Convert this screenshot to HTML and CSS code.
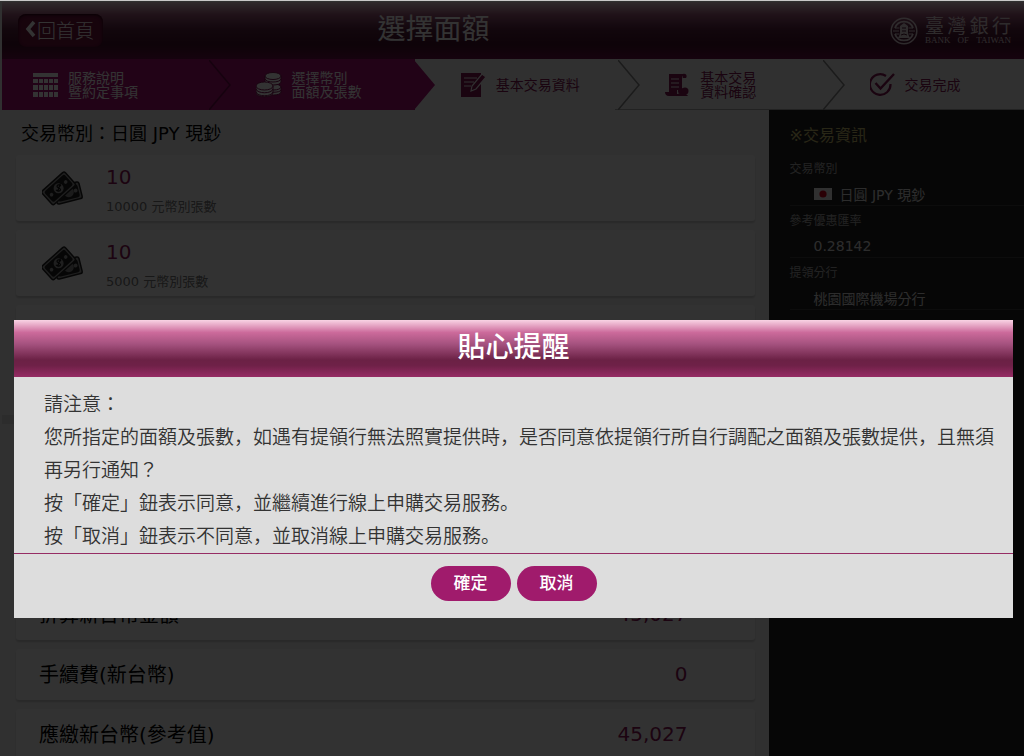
FILE: index.html
```html
<!DOCTYPE html>
<html lang="zh-Hant">
<head>
  <meta charset="UTF-8">
  <meta name="viewport" content="width=device-width, initial-scale=1">
  <title>選擇面額</title>
  <link rel="stylesheet" href="styles.css">
</head>

<body>
  <svg class="symbols" aria-hidden="true">
    <symbol id="chevron" viewBox="0 0 22 50">
      <path d="M0 0 L21 25 L0 50" fill="none" stroke="currentColor" stroke-width="1.5"/>
    </symbol>
    <symbol id="bills" viewBox="0 0 42 36">
      <g transform="rotate(-14 28 22)">
        <rect x="13" y="13" width="26" height="17" rx="2" fill="#999" stroke="#222" stroke-width="1.5"/>
        <rect x="15" y="15" width="22" height="13" rx="2" fill="#222"/>
        <circle cx="27" cy="21" r="5" fill="#888"/>
        <circle cx="34" cy="21" r="2" fill="#999"/>
      </g>
      <g transform="rotate(-42 17 17)">
        <rect x="1" y="8" width="31" height="18" rx="2" fill="#999" stroke="#222" stroke-width="1.5"/>
        <rect x="3" y="10" width="27" height="14" rx="2" fill="#222"/>
        <circle cx="16.5" cy="17" r="5" fill="#999"/>
        <circle cx="7" cy="17" r="1.8" fill="#999"/>
        <circle cx="26" cy="17" r="1.8" fill="#999"/>
      </g>
      <path d="M19 15c-2-2-4-1-4 .5s4 1.5 3.500 3.300-3 1.500-4.500 0M18.500 12.500l-3 8" fill="none" stroke="#111" stroke-width="1.2"/>
    </symbol>
  </svg>

  <div class="page">
    <header class="header">
      <button type="button" class="home">
        <svg width="11" height="18" viewBox="0 0 11 18"><path d="M9 2 L3 9 L9 16" fill="none" stroke="currentColor" stroke-width="3.5"/></svg>
        回首頁
      </button>
      <h1>選擇面額</h1>
      <div class="logo">
        <svg width="28" height="28" viewBox="0 0 28 28" fill="none" stroke="currentColor">
          <circle cx="14" cy="14" r="12.8" stroke-width="1.5"/>
          <path d="M5 11a9.500 9.500 0 0 1 18 0M5 17a9.500 9.500 0 0 0 18 0" stroke-width="1.8"/>
          <path d="M5 11h4.500M3 14h6M5 17h4.500M18.500 11H23M19 14h6M18.500 17H23" stroke-width="1.2"/>
          <path d="M14 6l4 3v8l2 4H8l2-4V9z" fill="currentColor" stroke="none"/>
          <path d="M12 11h4M12 14h4M11 18l3-1 3 1" stroke="#4a1630"/>
        </svg>
        <div class="logo-text">
          <div class="logo-zh"><span>臺</span><span>灣</span><span>銀</span><span>行</span></div>
          <div class="logo-en"><span>BANK</span><span>OF</span><span>TAIWAN</span></div>
        </div>
      </div>
    </header>

    <ol class="steps">
      <li class="step active">
        <svg class="icon" viewBox="0 0 28 28" fill="currentColor">
          <path d="M0 2h25v4H0zM0 8h5v4H0zM6 8h4v4H6zM11 8h4v4h-4zM16 8h4v4h-4zM21 8h4v4h-4zM0 14h5v5H0zM6 14h4v5H6zM11 14h4v5h-4zM16 14h4v5h-4zM21 14h4v5h-4zM0 21h5v5H0zM6 21h4v5H6zM11 21h4v5h-4zM16 21h4v5h-4zM21 21h4v5h-4z"/>
        </svg>
        <span>服務說明<br>暨約定事項</span>
      </li>
      <li class="step active">
        <svg class="chevron"><use href="#chevron"/></svg>
        <svg class="icon" viewBox="0 0 28 28">
          <g fill="currentColor" stroke="#7d1253">
            <path d="M10 16v5c0 4 15 4 15 0v-5z"/>
            <path d="M10 19c1 3 14 3 15 0" fill="none"/>
            <ellipse cx="17.5" cy="16" rx="7.5" ry="3"/>
            <path d="M9 5v6c0 4 16 4 16 0V5z"/>
            <path d="M9 8c1 4 15 4 16 0" fill="none"/>
            <ellipse cx="17" cy="5" rx="8" ry="3.5"/>
            <path d="M0 15v7c0 5 17 5 17 0v-7z"/>
            <path d="M0 18c1 5 16 5 17 0M0 21c1 5 16 5 17 0" fill="none"/>
            <ellipse cx="8.5" cy="15" rx="8.5" ry="4"/>
          </g>
        </svg>
        <span>選擇幣別<br>面額及張數</span>
      </li>
      <li class="step after-active">
        <svg class="chevron" viewBox="0 0 22 50"><path d="M0 0 L21 25 L0 50z"/></svg>
        <svg class="icon" viewBox="0 0 28 28">
          <path d="M0 2h20v24H0z" fill="currentColor"/>
          <path d="M3 7h13M3 11h10M3 15h7" stroke="#f0f0f0" stroke-width="1.2"/>
          <path d="M10 20l1-5L21 3l4 3-10 12z" fill="currentColor" stroke="#f0f0f0" stroke-width="1.2"/>
        </svg>
        <span>基本交易資料</span>
      </li>
      <li class="step">
        <svg class="chevron"><use href="#chevron"/></svg>
        <svg class="icon" viewBox="0 0 28 28">
          <path d="M4 3h15q-2 2-2 5v11h-5v4H4zM0 21h9c0 2 2 2 4 2v2H4c-3 0-4-2-4-4z" fill="currentColor"/>
          <path d="M6 8h8M6 12h8M6 16h8" stroke="#f0f0f0"/>
          <path d="M18 3c4-1 4 3 3 4h-3z" fill="currentColor"/>
          <circle cx="16" cy="20" r="3" fill="currentColor"/>
          <circle cx="20" cy="20" r="3.5" fill="currentColor"/>
          <path d="M11 25c1-4 10-4 12 0z" fill="currentColor"/>
        </svg>
        <span>基本交易<br>資料確認</span>
      </li>
      <li class="step">
        <svg class="chevron"><use href="#chevron"/></svg>
        <svg class="icon" viewBox="0 0 28 28" fill="none" stroke="currentColor">
          <path d="M16 5A10.300 10.300 0 1 0 20.500 13" stroke-width="2.2"/>
          <path d="M5.500 12l5 5.500L24 3" stroke-width="2.4"/>
        </svg>
        <span>交易完成</span>
      </li>
    </ol>

    <div class="columns">
      <main class="main">
        <h2>交易幣別：日圓 JPY 現鈔</h2>
        <div class="cards">
          <div class="card bill">
            <svg width="42" height="36"><use href="#bills"/></svg>
            <div>
              <div class="amount">10</div>
              <div class="note">10000 元幣別張數</div>
            </div>
          </div>
          <div class="card bill">
            <svg width="42" height="36"><use href="#bills"/></svg>
            <div>
              <div class="amount">10</div>
              <div class="note">5000 元幣別張數</div>
            </div>
          </div>
          <div class="card bill"></div>
        </div>
        <div class="cards summary">
          <div class="card total"><span>折算新台幣金額</span><span class="amount">45,027</span></div>
          <div class="card total"><span>手續費(新台幣)</span><span class="amount">0</span></div>
          <div class="card total"><span>應繳新台幣(參考值)</span><span class="amount">45,027</span></div>
        </div>
      </main>

      <aside class="info">
        <h3>※交易資訊</h3>
        <dl>
          <dt>交易幣別</dt>
          <dd><svg class="flag" viewBox="0 0 18 12"><rect width="18" height="12" fill="#eee"/><circle cx="9" cy="6" r="3.6" fill="#d0021b"/></svg>日圓 JPY 現鈔</dd>
          <dt>參考優惠匯率</dt>
          <dd>0.28142</dd>
          <dt>提領分行</dt>
          <dd>桃園國際機場分行</dd>
        </dl>
      </aside>
    </div>
  </div>

  <div class="overlay">
    <div class="dialog" role="dialog" aria-modal="true" aria-labelledby="dialog-title">
      <h2 class="dialog-title" id="dialog-title">貼心提醒</h2>
      <div class="dialog-body" lang="ja">
        <p>請注意：</p>
        <p>您所指定的面額及張數，如遇有提領行無法照實提供時，是否同意依提領行所自行調配之面額及張數提供，且無須再另行通知？</p>
        <p>按「確定」鈕表示同意，並繼續進行線上申購交易服務。</p>
        <p>按「取消」鈕表示不同意，並取消線上申購交易服務。</p>
      </div>
      <div class="dialog-buttons">
        <button type="button">確定</button>
        <button type="button">取消</button>
      </div>
    </div>
  </div>
</body>
</html>
```

FILE: styles.css
```css
* {
  box-sizing: border-box;
}
body {
  margin: 0;
  border-top: 1px solid #c8c8c8;
  background: #f0f0f0;
  color: #000;
  font-family: "DejaVu Sans", "Noto Sans CJK TC", sans-serif;
}
h1, h2, h3, p, ol, dl, dd {
  margin: 0;
  padding: 0;
  font-weight: 400;
}
button {
  font-family: inherit;
  border: 0;
  padding: 0;
}
.symbols {
  display: none;
}
/* no scrolling behind the open dialog */
.page {
  height: calc(100vh - 1px);
  padding: 1px 0 0 2px;
  overflow: hidden;
}

/* header */
.header {
  display: flex;
  align-items: center;
  height: 57px;
  padding-left: 16px;
  background: linear-gradient(#ecd0dc, #a05a7c 22%, #5a2340 48%, #450f2c 75%, #6e1048);
  color: #fff;
}
.home {
  display: flex;
  align-items: center;
  justify-content: center;
  width: 85px;
  height: 33px;
  padding: 0 2px 3px 0;
  border-radius: 8px;
  background: #72143f;
  box-shadow: inset 0 1px 3px #20000f;
  color: #fff;
  font-size: 19px;
  font-weight: 300;
}
.home svg {
  margin-right: 1px;
}
.header h1 {
  flex: 1;
  padding-bottom: 2px;
  text-align: center;
  font-size: 28px;
  line-height: 32px;
}
.logo {
  display: flex;
  justify-content: flex-end;
  align-items: center;
  gap: 7px;
  width: 260px;
  padding-right: 13px;
  color: #e6d6dd;
}
.logo-text {
  width: 86px;
}
.logo-zh, .logo-en {
  display: flex;
  justify-content: space-between;
}
.logo-zh {
  font-size: 19px;
  line-height: 20px;
}
.logo-en {
  font: 9px/9px "Liberation Serif", serif;
}

/* steps */
.steps {
  display: grid;
  grid-template-columns: repeat(5, 1fr);
  height: 51px;
  border-bottom: 1px solid #aaa;
  background: #f0f0f0;
  color: #821450;
  list-style: none;
  font-size: 14px;
  line-height: 14px;
}
.step {
  display: flex;
  align-items: center;
  padding-top: 1px;
}
.step.active {
  background: #a81072;
  color: #fff;
}
.step:first-child {
  padding-left: 31px;
}
.chevron {
  width: 22px;
  height: 50px;
  margin: 0 25px 0 3px;
  color: #888;
}
.active .chevron {
  color: #6c0a49;
}
.after-active {
  background: linear-gradient(to right, #a81072 4px, #f0f0f0 4px);
}
.after-active .chevron {
  fill: #a81072;
}
.icon {
  flex: none;
  width: 28px;
  height: 28px;
  margin-right: 7px;
}

/* content */
.columns {
  display: grid;
  grid-template-columns: 3fr 1fr;
  min-height: 100%;
}
.main h2 {
  padding: 10px 19px 7px;
  font-size: 18px;
  line-height: 28px;
}
.cards {
  display: grid;
  gap: 9px;
  padding: 0 14px 44px;
}
.card {
  display: flex;
  align-items: center;
  border-radius: 3px;
  background: #fafafa;
  box-shadow: 0 2px 2px #c8c8c8;
}
.bill {
  gap: 22px;
  height: 66px;
  padding: 2px 0 0 26px;
}
.amount {
  color: #8e1458;
  font-size: 20px;
  line-height: 28px;
}
.note {
  padding-top: 8px;
  color: #777;
  font-size: 13px;
  line-height: 16px;
}
.summary {
  padding-top: 165px;
  border-top: 9px solid #dcdcdc;
}
.total {
  justify-content: space-between;
  height: 51px;
  padding: 0 67px 2px 23px;
  font-size: 20px;
}
.info {
  padding: 12px 0 0 21px;
  background: #222;
  color: #ddd;
}
.info h3 {
  padding-bottom: 8px;
  color: #c8be6e;
  font-size: 16px;
  line-height: 28px;
}
.info dt {
  color: #aaa;
  font-size: 12px;
  line-height: 22px;
}
.info dd {
  display: flex;
  align-items: center;
  gap: 8px;
  height: 26px;
  margin-bottom: 4px;
  padding: 2px 0 0 24px;
  border-bottom: 1px solid #3c3c3c;
  font-size: 14px;
}
.flag {
  width: 18px;
  height: 12px;
}

/* dialog */
.overlay {
  position: fixed;
  top: 1px;
  right: 0;
  bottom: 0;
  left: 0;
  padding: 319px 11px 0 14px;
  background: rgba(0, 0, 0, 0.8);
}
.dialog {
  background: #ddd;
}
.dialog-title {
  padding: 12px 0 13px;
  background: linear-gradient(#f9d3e4, #cc6a9b 22%, #a5527f 42%, #6b2145 70%, #6f2148 80%, #962c64);
  color: #fff;
  text-align: center;
  font-size: 28px;
  font-weight: 500;
  line-height: 32px;
}
/* the JP face keeps the full-width comma at the lower left */
.dialog-body {
  padding: 9px 15px 2px 30px;
  border-bottom: 1px solid #962c64;
  color: #333;
  font-family: "Noto Sans CJK JP", sans-serif;
  font-size: 19px;
  line-height: 33px;
}
.dialog-body p {
  font-weight: 350;
}
.dialog-buttons {
  display: flex;
  justify-content: center;
  gap: 6px;
  padding: 12px 0 17px;
}
.dialog-buttons button {
  width: 80px;
  height: 35px;
  padding-bottom: 4px;
  border-radius: 18px;
  background: #a01b6c;
  color: #fff;
  font-size: 17px;
  font-weight: 500;
}
```
